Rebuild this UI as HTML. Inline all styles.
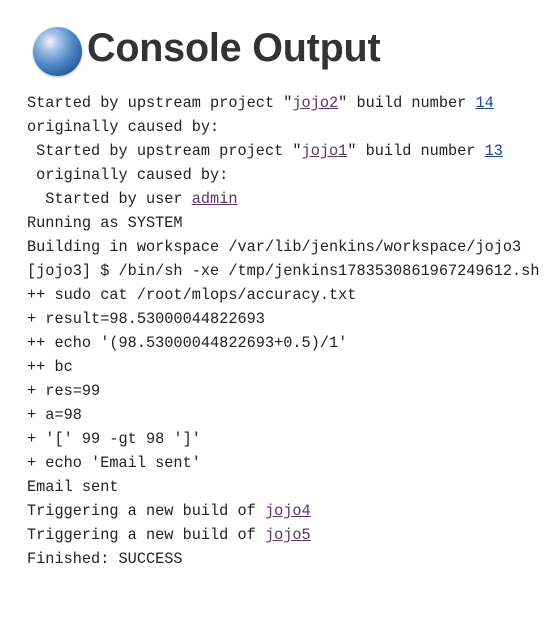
<!DOCTYPE html>
<html><head><style>
body{margin:0;background:#fff;width:556px;height:635px;overflow:hidden}
h1{position:absolute;left:87px;top:23px;margin:0;font:bold 39.5px/50px "Liberation Sans",sans-serif;color:#333;letter-spacing:-0.2px}
.ball{position:absolute;left:33px;top:27px;width:49px;height:49px;border-radius:50%;
background:radial-gradient(circle at 35% 30%,#f4f8fc 0%,#a9c6e8 18%,#4f86c6 50%,#1d4f93 85%,#163f78 100%);box-shadow:0 1px 2px rgba(0,0,0,.3)}
pre{position:absolute;left:27px;top:91px;margin:0;font:15.25px/24px "Liberation Mono",monospace;color:#222}
a{color:#204a87;text-decoration:underline}
a.v{color:#5c3566}
</style></head><body>
<div class="ball"></div>
<h1>Console Output</h1>
<pre>Started by upstream project "<a class="v">jojo2</a>" build number <a>14</a>
originally caused by:
 Started by upstream project "<a class="v">jojo1</a>" build number <a>13</a>
 originally caused by:
  Started by user <a class="v">admin</a>
Running as SYSTEM
Building in workspace /var/lib/jenkins/workspace/jojo3
[jojo3] $ /bin/sh -xe /tmp/jenkins1783530861967249612.sh
++ sudo cat /root/mlops/accuracy.txt
+ result=98.53000044822693
++ echo '(98.53000044822693+0.5)/1'
++ bc
+ res=99
+ a=98
+ '[' 99 -gt 98 ']'
+ echo 'Email sent'
Email sent
Triggering a new build of <a class="v">jojo4</a>
Triggering a new build of <a class="v">jojo5</a>
Finished: SUCCESS</pre>
</body></html>
